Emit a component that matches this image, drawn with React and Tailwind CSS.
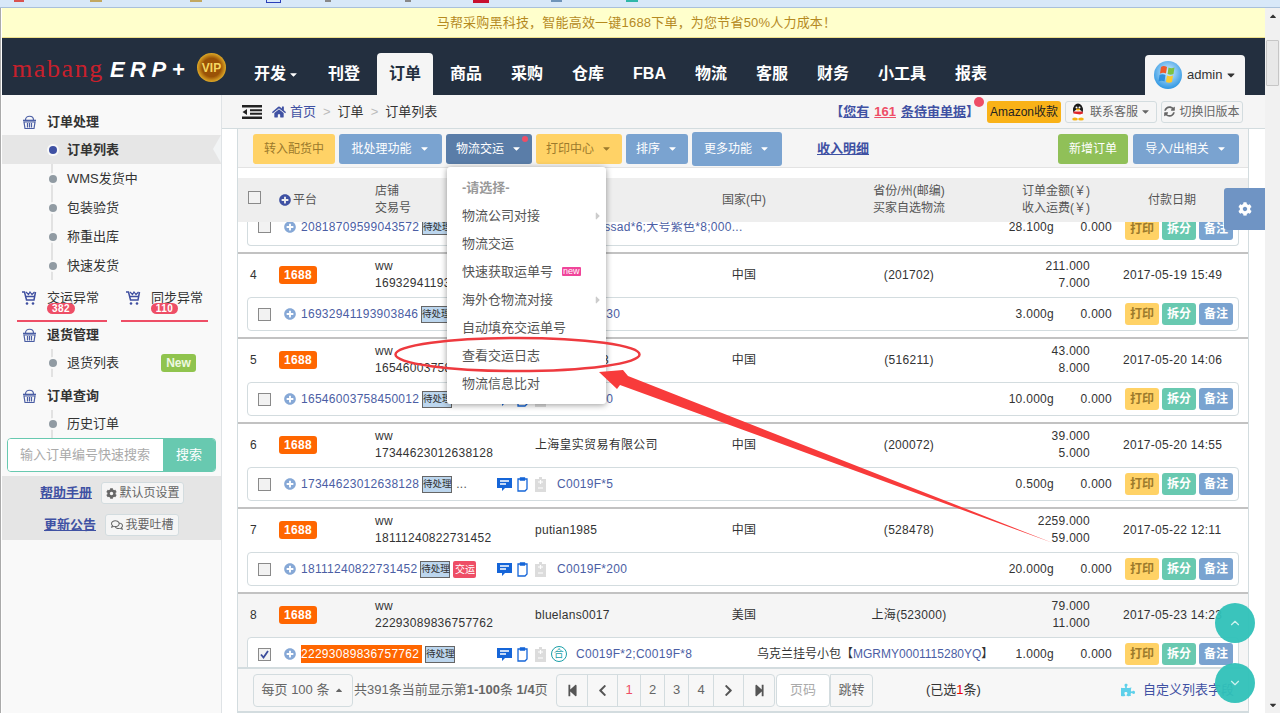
import { ChevronUp, ChevronDown } from 'lucide-react';
import {
  FaCaretDown, FaCaretRight, FaCaretUp, FaChevronLeft, FaChevronRight, FaCog, FaHome, FaPlusCircle,
  FaPuzzlePiece, FaRegComments, FaStepBackward, FaStepForward, FaSyncAlt,
} from 'react-icons/fa';

const navItems = ['刊登', '订单', '商品', '采购', '仓库', 'FBA', '物流', '客服', '财务', '小工具', '报表'];
const menuItems = [
  { label: '物流公司对接', more: true },
  { label: '物流交运' },
  { label: '快速获取运单号', isNew: true },
  { label: '海外仓物流对接', more: true },
  { label: '自动填充交运单号' },
  { label: '查看交运日志' },
  { label: '物流信息比对' },
];

const orders = [
  {
    no: 4, store: '16932941193903846', buyer: '', buyerPad: true, country: '中国', region: '(201702)',
    amount: '211.000', freight: '7.000', date: '2017-05-19 15:49', goods: 'C0019F*30', weight: '3.000g',
  },
  {
    no: 5, store: '16546003758450012', buyer: '3', buyerPad: true, country: '中国', region: '(516211)',
    amount: '43.000', freight: '8.000', date: '2017-05-20 14:06', goods: 'C0019F*0', weight: '10.000g',
  },
  {
    no: 6, store: '17344623012638128', buyer: '上海皇实贸易有限公司', country: '中国', region: '(200072)',
    amount: '39.000', freight: '5.000', date: '2017-05-20 14:55', goods: 'C0019F*5', weight: '0.500g', dots: true,
  },
  {
    no: 7, store: '18111240822731452', buyer: 'putian1985', country: '中国', region: '(528478)',
    amount: '2259.000', freight: '59.000', date: '2017-05-22 12:11', goods: 'C0019F*200', weight: '20.000g', shipTag: true,
  },
  {
    no: 8, store: '22293089836757762', buyer: 'bluelans0017', country: '美国', region: '上海(523000)',
    amount: '79.000', freight: '11.000', date: '2017-05-23 14:23', goods: 'C0019F*2;C0019F*8', weight: '1.000g',
    selected: true, merged: true, ship: '乌克兰挂号小包', track: 'MGRMY0001115280YQ',
  },
];

function Basket() {
  return (
    <svg width="15" height="16" viewBox="0 0 15 16" fill="none" stroke="#4b5ea4" strokeWidth="1.2">
      <path d="M3.5 6 C3.5 1 11.5 1 11.5 6" />
      <path d="M1 6.5h13" strokeWidth="1.6" />
      <path d="M2 8h11l-1 6.5H3z" />
      <path d="M5.5 9v4.5M7.5 9v4.5M9.5 9v4.5" />
    </svg>
  );
}

function CrownCart() {
  return (
    <svg width="15" height="15" viewBox="0 0 15 15" fill="none" stroke="#3f4fa0" strokeWidth="1.5">
      <path d="M0 1h2.5l2 8h7.5l1.5-8" />
      <path d="M4 1l2.5 2.5L8 1l2 2.5L12.5 1" strokeWidth="1.2" />
      <path d="M4 5.5h8.5" />
      <circle cx="5" cy="12.5" r="1.3" fill="#3f4fa0" stroke="none" />
      <circle cx="11" cy="12.5" r="1.3" fill="#3f4fa0" stroke="none" />
    </svg>
  );
}

function WindowsLogo() {
  return (
    <svg width="28" height="28" viewBox="0 0 28 28">
      <defs>
        <radialGradient id="orb" cx="50%" cy="40%" r="65%">
          <stop offset="0%" stopColor="#d8f0ff" />
          <stop offset="100%" stopColor="#1f8fe0" />
        </radialGradient>
      </defs>
      <circle cx="14" cy="14" r="14" fill="url(#orb)" />
      <path d="M7 6c2-1.500 4-1 6 0l-1 6.500c-2-1-4-1-6 0z" fill="#ef5a2a" />
      <path d="M14.500 6.500c2 1 4 1 6 0l-1 6.500c-2 1-4 1-6 0z" fill="#7cc242" />
      <path d="M5.500 14c2-1 4-1 6 0l-1 6.500c-2-1-4-1-6 0z" fill="#2f8fdc" />
      <path d="M13 14.500c2 1 4 1 6 0l-1 6.500c-2 1-4 1-6 0z" fill="#fbc92d" />
    </svg>
  );
}

function Penguin() {
  return (
    <svg width="14" height="18" viewBox="0 0 14 18">
      <ellipse cx="7" cy="7" rx="5" ry="6.500" fill="#1b1b1b" />
      <ellipse cx="7" cy="11" rx="4.500" ry="4.500" fill="#fff" />
      <path d="M2.500 8.500h9l.5 2-3 1-6.500-1z" fill="#e0262b" />
      <ellipse cx="4" cy="16" rx="2.800" ry="1.600" fill="#f6b312" />
      <ellipse cx="10" cy="16" rx="2.800" ry="1.600" fill="#f6b312" />
      <circle cx="5.500" cy="4.500" r="1" fill="#fff" />
      <circle cx="8.500" cy="4.500" r="1" fill="#fff" />
      <ellipse cx="7" cy="6.500" rx="2" ry="1" fill="#f6b312" />
    </svg>
  );
}

function ChatIcon() {
  return (
    <svg width="15" height="15" viewBox="0 0 15 15">
      <path d="M0 1h15v10H8l-3 3v-3H0z" fill="#1565d8" />
      <path d="M3 4h9M3 7h6" stroke="#fff" strokeWidth="1.300" />
    </svg>
  );
}

function ClipIcon({ grey }) {
  if (grey) {
    return (
      <svg width="11" height="15" viewBox="0 0 11 15">
        <path d="M0 2h11v13H0z" fill="#dcdcdc" />
        <path d="M4 0h3v3H4z" fill="#dcdcdc" />
        <path d="M3 5h5M5.500 3v4M3 11h5" stroke="#fff" strokeWidth="1.200" />
      </svg>
    );
  }
  return (
    <svg width="11" height="15" viewBox="0 0 11 15" fill="none" stroke="#1565d8" strokeWidth="1.300">
      <path d="M3 2H1v12h7l2-2V2H8" />
      <path d="M3.500 1h4v2h-4z" fill="#1565d8" />
    </svg>
  );
}

function Checkbox({ checked }) {
  return (
    <span className="flex h-[13px] w-[13px] shrink-0 items-center justify-center border border-[#8a8a8a] bg-[#f2f2f2]">
      {checked && (
        <svg width="9" height="9" viewBox="0 0 9 9" fill="none" stroke="#3b4c9b" strokeWidth="1.800">
          <path d="M1 4.500l2.500 3L8 1" />
        </svg>
      )}
    </span>
  );
}

function RowActions() {
  return (
    <div className="ml-[13px] flex gap-[3px] font-bold text-[12px] leading-none tracking-normal">
      <span className="flex h-[22px] w-[34px] items-center justify-center rounded-[3px] bg-[#ffd266] text-[#9c7a2c]">打印</span>
      <span className="flex h-[22px] w-[34px] items-center justify-center rounded-[3px] bg-[#68c9b0] text-white">拆分</span>
      <span className="flex h-[22px] w-[34px] items-center justify-center rounded-[3px] bg-[#7aa3d0] text-white">备注</span>
    </div>
  );
}

function StatusTag() {
  return (
    <span className="ml-[3px] flex h-[17px] w-[30px] shrink-0 items-center justify-center whitespace-nowrap border border-[#666] bg-[#bcd6ee] text-[9.500px] leading-none tracking-normal text-[#333]">待处理</span>
  );
}

function SubRow({ order }) {
  return (
    <div className="ml-[9px] mt-[2px] flex h-[34px] w-[992px] items-center rounded-[4px] border border-[#d3dcdf] bg-white pl-[10px] pr-[5px] text-[12px] tracking-[0.28px]">
      <Checkbox checked={order.selected} />
      <FaPlusCircle className="ml-[13px] shrink-0 text-[12px] text-[#86a8d6]" />
      <div className="ml-[5px] flex w-[196px] shrink-0 items-center">
        <a className={order.selected ? 'bg-[#ff6600] pr-[3px] text-white' : 'text-[#4b5ea4]'}>{order.store}</a>
        <StatusTag />
        {order.shipTag && (
          <span className="ml-[3px] w-[23px] rounded-[2px] bg-[#ee4e66] text-center text-[10px] leading-[17px] tracking-normal text-white">交运</span>
        )}
        {order.dots && <span className="ml-[4px] text-[#555]">...</span>}
      </div>
      <div className="flex items-center gap-[5px]">
        <ChatIcon />
        <ClipIcon />
        <span className="ml-[2px]">
          <ClipIcon grey />
        </span>
        {order.merged && (
          <span className="flex h-[16px] w-[16px] items-center justify-center rounded-full border border-[#1a9fa8] text-[10px] leading-none text-[#1a9fa8]">合</span>
        )}
      </div>
      <div className={order.merged ? 'ml-[9px] w-[181px] text-[#4b5ea4]' : 'ml-[11px] w-[197px] text-[#4b5ea4]'}>{order.goods}</div>
      <div className="whitespace-nowrap tracking-normal text-[#333]">
        {order.ship && (
          <>
            {order.ship}【<span className="text-[#4b5ea4]">{order.track}</span>】
          </>
        )}
      </div>
      <div className="ml-auto text-right text-[#333]">{order.weight}</div>
      <div className="w-[58px] text-right text-[#333]">0.000</div>
      <RowActions />
    </div>
  );
}

function OrderRow({ order }) {
  return (
    <div className={order.selected ? 'h-[85px] border-t-2 border-[#c2c2c2] bg-[#f5f5f5]' : 'h-[85px] border-t-2 border-[#c2c2c2] bg-white'}>
      <div className="grid h-[41px] grid-cols-[41px_96px_160px_169px_106px_198px_82px_159px] items-center text-[12px] tracking-[0.28px] text-[#333]">
        <div className="pl-[12px]">{order.no}</div>
        <div>
          <span className="flex h-[18px] w-[38px] items-center justify-center rounded-[3px] bg-[#ff6600] font-bold text-white">1688</span>
        </div>
        <div className="leading-[17px]">
          <div>ww</div>
          <div>{order.store}</div>
        </div>
        <div className={order.buyerPad ? 'pl-[67px]' : ''}>{order.buyer}</div>
        <div className="pr-[26px] text-center">{order.country}</div>
        <div className="text-center">{order.region}</div>
        <div className="text-right leading-[17px]">
          <div>{order.amount}</div>
          <div>{order.freight}</div>
        </div>
        <div className="whitespace-nowrap pl-[33px]">{order.date}</div>
      </div>
      <SubRow order={order} />
    </div>
  );
}

function SideItem({ children, active }) {
  return (
    <div className={active ? 'relative -ml-[51px] flex h-[29px] items-center bg-[#e6e6e6] pl-[47px] font-bold' : 'flex h-[29px] items-center -ml-[4px]'}>
      <span className={active ? 'h-[8px] w-[8px] rounded-full bg-[#3f51a3] ring-2 ring-[#f9f9f9]' : 'h-[8px] w-[8px] rounded-full bg-[#919ba3] ring-2 ring-[#f9f9f9]'} />
      <span className="ml-[10px]">{children}</span>
      {active && (
        <span className="absolute right-0 top-0 h-0 w-0 border-y-[14.5px] border-r-[8px] border-y-transparent border-r-[#f2f4f5]" />
      )}
    </div>
  );
}

function Btn({ className, children, caret }) {
  return (
    <span className={`flex h-[30px] items-center justify-center rounded-[3px] text-[12px] ${className}`}>
      {children}
      {caret && <FaCaretDown className="ml-[7px] text-[11px]" />}
    </span>
  );
}

export default function App() {
  return (
    <div className="relative flex h-[713px] w-[1280px] flex-col overflow-hidden bg-white font-['Liberation_Sans','Noto_Sans_CJK_SC',sans-serif] text-[13px] text-[#333]">
      {/* browser bookmarks strip */}
      <div className="flex h-[8px] shrink-0 items-start border-b border-[#a9c0da] bg-[#d8e8f8]">
        <span className="ml-[14px] h-[2px] w-[10px] bg-[#d9534f]" />
        <span className="ml-[66px] h-[2px] w-[12px] bg-[#c2a860]" />
        <span className="ml-[88px] h-[2px] w-[12px] bg-[#c2a860]" />
        <span className="ml-[64px] h-[3px] w-[15px] border-x border-b border-[#2a3fb8]" />
        <span className="ml-[44px] h-[2px] w-[6px] bg-[#888]" />
        <span className="ml-[74px] h-[2px] w-[6px] bg-[#888]" />
        <span className="ml-[62px] h-[3px] w-[16px] bg-[#c8102e]" />
        <span className="ml-[62px] h-[2px] w-[11px] bg-[#6f94b8]" />
        <span className="ml-[64px] h-[2px] w-[12px] bg-[#2fb7a8]" />
      </div>

      <div className="flex min-h-0 flex-1">
        <div className="flex min-w-0 flex-1 flex-col border-l border-[#aaa] pl-[1px]">
          <div className="flex h-[30px] shrink-0 items-center justify-center border-b border-[#efe08c] bg-[#ffffcc] pl-[6px] text-[13px] tracking-[0.2px] text-[#b58a1f]">
            马帮采购黑科技，智能高效一键1688下单，为您节省50%人力成本！
          </div>

          {/* top nav */}
          <div className="flex h-[57px] shrink-0 items-end bg-[#232f3f] text-white">
            <div className="flex h-full w-[240px] shrink-0 items-center pl-[10px] pt-[2px]">
              <span className="mt-[3px] font-['Liberation_Serif',serif] text-[26px] leading-none tracking-[1.6px] text-[#c8202c]">mabang</span>
              <span className="ml-[6px] mt-[5px] text-[22px] font-bold italic leading-none tracking-[5.500px] text-white">ERP+</span>
              <span className="ml-[7px] flex h-[29px] w-[29px] shrink-0 items-center justify-center rounded-full bg-[radial-gradient(circle,#9a5206_45%,#f2c230_78%)] text-[12px] font-bold text-[#f6d860]">VIP</span>
            </div>
            <div className="flex items-end gap-[5px] text-[16px] font-bold">
              <span className="flex h-[42px] items-center px-3">
                开发
                <FaCaretDown className="ml-[2px] text-[11px]" />
              </span>
              {navItems.map((item) =>
                item === '订单' ? (
                  <span key={item} className="flex h-[42px] items-center rounded-t-[4px] bg-[#f5f5f5] px-3 text-[#232f3f]">{item}</span>
                ) : (
                  <span key={item} className="flex h-[42px] items-center px-3">{item}</span>
                ),
              )}
            </div>
            <div className="ml-auto mr-[20px] flex h-[40px] w-[100px] items-center rounded-t-[4px] bg-[#f5f5f5] pl-[9px] text-[13px] text-[#333]">
              <WindowsLogo />
              <span className="ml-[5px]">admin</span>
              <FaCaretDown className="ml-[3px] text-[12px]" />
            </div>
          </div>

          <div className="flex min-h-0 flex-1">
            {/* sidebar */}
            <aside className="flex w-[220px] shrink-0 flex-col border-r border-[#dfe3e6] bg-[#f9f9f9]">
              <div className="mt-[8px] flex h-[26px] items-center pl-[20px] pt-[11px] font-bold">
                <Basket />
                <span className="ml-[10px]">订单处理</span>
              </div>
              <div className="ml-[49px] mt-[6px] border-l-2 border-[#e2e2e2]">
                <SideItem active>订单列表</SideItem>
                <SideItem>WMS发货中</SideItem>
                <SideItem>包装验货</SideItem>
                <SideItem>称重出库</SideItem>
                <SideItem>快速发货</SideItem>
              </div>
              <div className="mt-[2px] flex gap-[14px] pl-[15px]">
                <div className="flex h-[40px] w-[90px] border-b-2 border-[#ee4e66] pl-[5px] pt-[9px]">
                  <CrownCart />
                  <div className="relative ml-[10px] leading-[14px]">
                    交运异常
                    <span className="absolute left-0 top-[12px] flex h-[11px] w-[28px] items-center justify-center rounded-full bg-[#ee4e66] text-[10px] font-bold tracking-[0.5px] text-white">382</span>
                  </div>
                </div>
                <div className="flex h-[40px] w-[87px] border-b-2 border-[#ee4e66] pl-[5px] pt-[9px]">
                  <CrownCart />
                  <div className="relative ml-[10px] leading-[14px]">
                    同步异常
                    <span className="absolute left-0 top-[12px] flex h-[11px] w-[27px] items-center justify-center rounded-full bg-[#ee4e66] text-[10px] font-bold tracking-[0.5px] text-white">110</span>
                  </div>
                </div>
              </div>
              <div className="flex h-[26px] items-center pl-[20px] font-bold">
                <Basket />
                <span className="ml-[10px]">退货管理</span>
              </div>
              <div className="ml-[49px] mt-[1px] border-l-2 border-[#e2e2e2]">
                <div className="flex h-[28px] items-center -ml-[4px]">
                  <span className="h-[8px] w-[8px] rounded-full bg-[#919ba3] ring-2 ring-[#f9f9f9]" />
                  <span className="ml-[10px]">退货列表</span>
                  <span className="ml-[42px] flex h-[18px] w-[35px] items-center justify-center rounded-[3px] bg-[#90c44e] text-[12px] font-bold text-[#eef8e0]">New</span>
                </div>
              </div>
              <div className="mt-[5px] flex h-[28px] items-center pl-[20px] font-bold">
                <Basket />
                <span className="ml-[10px]">订单查询</span>
              </div>
              <div className="ml-[49px] h-[28px] border-l-2 border-[#e2e2e2]">
                <div className="flex h-[28px] items-center -ml-[4px]">
                  <span className="h-[8px] w-[8px] rounded-full bg-[#919ba3] ring-2 ring-[#f9f9f9]" />
                  <span className="ml-[10px]">历史订单</span>
                </div>
              </div>
              <div className="ml-[5px] flex h-[34px] w-[209px] overflow-hidden rounded-[4px] border border-[#68c9b0]">
                <span className="flex flex-1 items-center bg-white pl-[12px] text-[#aaa]">输入订单编号快速搜索</span>
                <span className="flex w-[52px] items-center justify-center bg-[#68c9b0] text-white">搜索</span>
              </div>
              <div className="mt-[4px] h-[64px] bg-[#e5e5e5] pt-[1px]">
                <div className="flex h-[32px] items-center pl-[38px]">
                  <a className="font-bold text-[#3f51a3] underline">帮助手册</a>
                  <span className="ml-[9px] flex h-[22px] w-[83px] items-center justify-center rounded-[3px] border border-[#d3dcdf] bg-[#f5f5f5] text-[12px] text-[#666]">
                    <FaCog className="mr-[3px] text-[11px]" />
                    默认页设置
                  </span>
                </div>
                <div className="flex h-[31px] items-center pl-[42px]">
                  <a className="font-bold text-[#3f51a3] underline">更新公告</a>
                  <span className="ml-[9px] flex h-[22px] w-[74px] items-center justify-center rounded-[3px] border border-[#d3dcdf] bg-[#f5f5f5] text-[12px] text-[#666]">
                    <FaRegComments className="mr-[3px] text-[12px]" />
                    我要吐槽
                  </span>
                </div>
              </div>
            </aside>

            {/* main */}
            <main className="relative flex min-w-0 flex-1 flex-col">
              <div className="flex h-[34px] shrink-0 items-center border-b border-[#d3dcdf] bg-[#f5f5f5] pl-[20px] pr-[1px] text-[13px]">
                <svg width="20" height="14" viewBox="0 0 20 14" fill="#222">
                  <path d="M0 0h20v2.500H0zM0 11.500h20V14H0zM8 4.200h12v2H8zM8 7.800h12v2H8zM5 4v6L0.500 7z" />
                </svg>
                <FaHome className="ml-[10px] text-[14px] text-[#3f51a3]" />
                <span className="ml-[4px] text-[#3f51a3]">首页</span>
                <span className="mx-[7px] text-[#bbb]">&gt;</span>
                <span>订单</span>
                <span className="mx-[7px] text-[#bbb]">&gt;</span>
                <span>订单列表</span>
                <div className="ml-auto mr-[21px] flex items-center">
                  <span className="relative text-[13px] font-bold text-[#3f51a3]">
                    【<a className="underline">您有</a>
                    <a className="mx-[5px] text-[#ee4e66] underline">161</a>
                    <a className="underline">条待审单据</a>】
                    <span className="absolute -right-[5px] -top-[5px] h-[10px] w-[10px] rounded-full bg-[#ee4e66]" />
                  </span>
                  <span className="ml-[8px] flex h-[22px] w-[74px] items-center justify-center rounded-[3px] bg-[#f9b218] text-[12px] text-[#222]">Amazon收款</span>
                  <span className="ml-[4px] flex h-[22px] w-[92px] items-center justify-center rounded-[3px] border border-[#d3dcdf] text-[12px] text-[#666]">
                    <Penguin />
                    <span className="ml-[5px]">联系客服</span>
                    <FaCaretDown className="ml-[2px] text-[11px]" />
                  </span>
                  <span className="ml-[4px] flex h-[22px] w-[82px] items-center justify-center rounded-[3px] border border-[#d3dcdf] text-[12px] text-[#666]">
                    <FaSyncAlt className="mr-[4px] text-[11px]" />
                    切换旧版本
                  </span>
                </div>
              </div>

              <div className="ml-[15px] flex min-h-0 w-[1012px] flex-1 flex-col border-x border-[#d3dcdf]">
                {/* toolbar */}
                <div className="flex h-[39px] shrink-0 items-center border-b border-[#e3e3e3] bg-[#f5f5f5] pl-[15px] pt-[1px]">
                  <Btn className="w-[82px] bg-[#ffd266] text-[#9c7a2c]">转入配货中</Btn>
                  <Btn className="ml-[4px] w-[103px] bg-[#7aa3d0] text-white" caret>批处理功能</Btn>
                  <div className="relative z-20 ml-[4px]">
                    <Btn className="w-[86px] bg-[#5a7da8] text-white" caret>物流交运</Btn>
                    <span className="absolute right-[4px] top-[2px] h-[6px] w-[6px] rounded-full bg-[#ee4e66]" />
                    {/* dropdown */}
                    <div className="absolute left-[1px] top-[33px] z-20 w-[159px] rounded-[3px] bg-white pt-[7px] shadow-[0_1px_6px_rgba(0,0,0,0.4)]">
                      <div className="flex h-[28px] items-center pl-[15px] font-bold text-[#999]">-请选择-</div>
                      {menuItems.map((item) => (
                        <div key={item.label} className="flex h-[28px] items-center pl-[15px] text-[#555]">
                          {item.label}
                          {item.isNew && (
                            <span className="ml-[9px] rounded-[1px] bg-[#f0459a] px-[1px] text-[9px] leading-[9px] text-white">new</span>
                          )}
                          {item.more && <FaCaretRight className="ml-auto mr-[2px] text-[12px] text-[#ccc]" />}
                        </div>
                      ))}
                      <div className="h-[6px]" />
                    </div>
                  </div>
                  <Btn className="ml-[4px] w-[86px] bg-[#ffd266] text-[#9c7a2c]" caret>打印中心</Btn>
                  <Btn className="ml-[4px] w-[62px] bg-[#7aa3d0] text-white" caret>排序</Btn>
                  <Btn className="ml-[4px] !h-[34px] w-[90px] bg-[#7aa3d0] text-white" caret>更多功能</Btn>
                  <a className="ml-[35px] font-bold text-[#3f51a3] underline">收入明细</a>
                  <Btn className="ml-auto w-[70px] bg-[#90c058] text-white">新增订单</Btn>
                  <Btn className="ml-[5px] mr-[9px] w-[106px] bg-[#7aa3d0] text-white" caret>导入/出相关</Btn>
                </div>

                <div className="h-[10px] shrink-0 bg-white" />

                <div className="relative z-10 grid h-[44px] shrink-0 grid-cols-[41px_96px_160px_169px_106px_198px_82px_159px] items-center bg-[#eeeeee] text-[12px] leading-[17px] text-[#555]">
                  <div className="pb-[6px] pl-[10px]">
                    <Checkbox />
                  </div>
                  <div className="flex items-center">
                    <FaPlusCircle className="text-[12px] text-[#3f51a3]" />
                    <span className="ml-[2px]">平台</span>
                  </div>
                  <div>
                    <div>店铺</div>
                    <div>交易号</div>
                  </div>
                  <div />
                  <div className="pr-[26px] text-center">国家(中)</div>
                  <div className="text-center">
                    <div>省份/州(邮编)</div>
                    <div>买家自选物流</div>
                  </div>
                  <div className="whitespace-nowrap text-right">
                    <div>订单金额(￥)</div>
                    <div>收入运费(￥)</div>
                  </div>
                  <div className="pl-[58px]">付款日期</div>
                </div>

                {/* order list */}
                <div className="-mt-[8px] min-h-0 flex-1 overflow-hidden">
                  <div className="h-[38px] pt-[8px]">
                    <div className="ml-[9px] flex h-[24px] w-[992px] items-center rounded-b-[4px] border-x border-b border-[#d3dcdf] pb-[14px] pl-[10px] pr-[5px] text-[12px] leading-[10px] tracking-[0.28px]">
                      <Checkbox />
                      <FaPlusCircle className="ml-[13px] shrink-0 text-[12px] text-[#86a8d6]" />
                      <a className="ml-[5px] text-[#4b5ea4]">20818709599043572</a>
                      <StatusTag />
                      <span className="ml-[152px] text-[#4b5ea4]">ssad*6;大号紫色*8;000...</span>
                      <span className="ml-auto">28.100g</span>
                      <span className="w-[58px] text-right">0.000</span>
                      <div className="mt-[4px]">
                        <RowActions />
                      </div>
                    </div>
                  </div>
                  {orders.map((order) => (
                    <OrderRow key={order.no} order={order} />
                  ))}
                </div>

                {/* pager */}
                <div className="flex h-[46px] shrink-0 items-center border-y-2 border-[#d3dcdf] bg-[#f7f7f7] pl-[15px] text-[13px] text-[#666]">
                  <span className="flex h-[33px] w-[100px] items-center justify-center rounded-[4px] border border-[#d3dcdf]">
                    每页 100 条
                    <FaCaretUp className="ml-[5px] text-[10px]" />
                  </span>
                  <span className="ml-[1px] w-[202px] whitespace-nowrap">共391条当前显示第<b>1-100</b>条 <b>1/4</b>页</span>
                  <div className="flex h-[33px] items-stretch rounded-[4px] border border-[#d3dcdf] text-[13px]">
                    <span className="flex w-[31px] items-center justify-center border-r border-[#d3dcdf]"><FaStepBackward className="text-[13px] text-[#555]" /></span>
                    <span className="flex w-[30px] items-center justify-center border-r border-[#d3dcdf]"><FaChevronLeft className="text-[13px] text-[#555]" /></span>
                    <span className="flex w-[23px] items-center justify-center border-r border-[#d3dcdf] text-[#ee4e66]">1</span>
                    <span className="flex w-[24px] items-center justify-center border-r border-[#d3dcdf]">2</span>
                    <span className="flex w-[24px] items-center justify-center border-r border-[#d3dcdf]">3</span>
                    <span className="flex w-[25px] items-center justify-center border-r border-[#d3dcdf]">4</span>
                    <span className="flex w-[30px] items-center justify-center border-r border-[#d3dcdf]"><FaChevronRight className="text-[13px] text-[#555]" /></span>
                    <span className="flex w-[30px] items-center justify-center"><FaStepForward className="text-[13px] text-[#555]" /></span>
                  </div>
                  <span className="ml-[1px] flex h-[33px] w-[54px] items-center justify-center rounded-[4px] border border-[#d3dcdf] bg-white text-[#aaa]">页码</span>
                  <span className="flex h-[33px] w-[43px] items-center justify-center rounded-r-[4px] border border-[#d3dcdf]">跳转</span>
                  <span className="ml-[53px] text-[#333]">
                    (已选<span className="text-[#e00]">1</span>条)
                  </span>
                  <FaPuzzlePiece className="ml-[140px] text-[14px] text-[#5ed0ea]" />
                  <a className="ml-[8px] whitespace-nowrap text-[#3f51a3]">自定义列表字段</a>
                </div>
              </div>
            </main>
          </div>
        </div>

        {/* page scrollbar */}
        <div className="flex w-[15px] shrink-0 flex-col items-center justify-between bg-[#f1f1f1]">
          <div className="flex w-full flex-col items-center">
            <FaCaretUp className="mt-[3px] text-[10px] text-[#333]" />
            <div className="mt-[19px] h-[46px] w-[13px] rounded-[1px] border border-[#c6c6c6] bg-[#e8e8e8]" />
          </div>
          <FaCaretDown className="mb-[3px] text-[10px] text-[#333]" />
        </div>
      </div>

      {/* settings tab */}
      <div className="absolute left-[1224px] top-[188px] z-10 flex h-[42px] w-[41px] items-center justify-center rounded-l-[3px] bg-[#6f94c4]">
        <FaCog className="text-[14px] text-white" />
      </div>

      {/* scroll buttons */}
      <div className="absolute left-[1215px] top-[603px] z-30 flex h-[40px] w-[40px] items-center justify-center rounded-full bg-[#2fc1b8]/95 text-[#cdf3ef]">
        <ChevronUp size={14} />
      </div>
      <div className="absolute left-[1215px] top-[663px] z-30 flex h-[40px] w-[40px] items-center justify-center rounded-full bg-[#2fc1b8]/95 text-[#cdf3ef]">
        <ChevronDown size={14} />
      </div>

      {/* hand drawn annotation */}
      <svg className="pointer-events-none absolute inset-0 z-40" width="1280" height="713" fill="none">
        <ellipse cx="517.500" cy="354.500" rx="122" ry="16.500" stroke="#ee3a3f" strokeWidth="2.500" />
        <path d="M1053 543L628 376 623 370 599 372 617 389 620 385z" fill="#f83b3b" />
      </svg>
    </div>
  );
}
